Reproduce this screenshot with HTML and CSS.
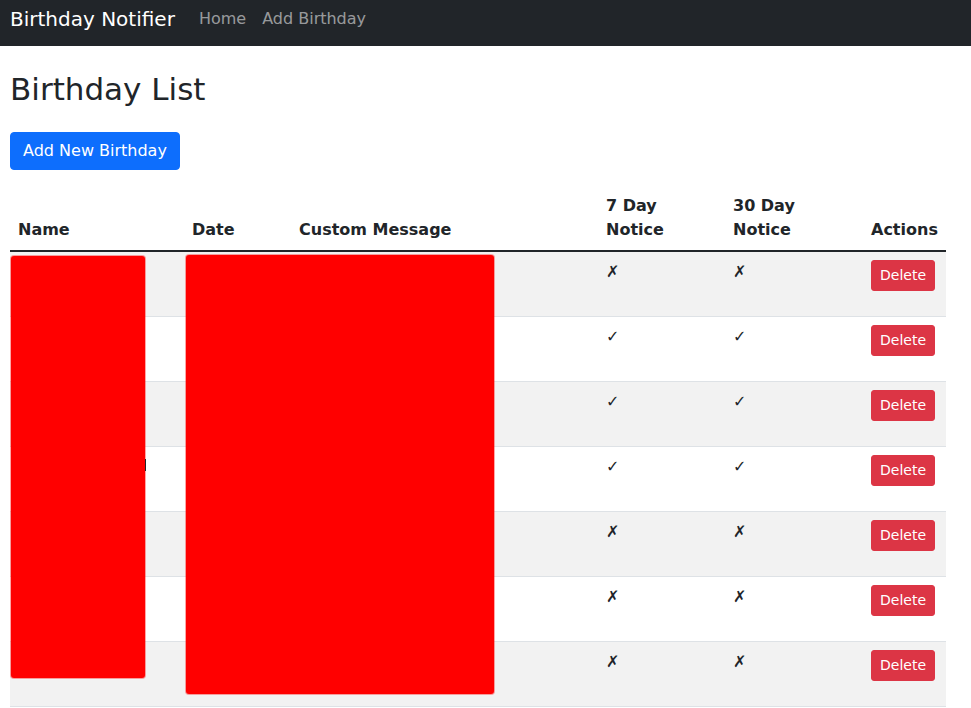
FILE: index.html
```html
<!DOCTYPE html>
<html lang="en">
<head>
<meta charset="utf-8">
<title>Birthday Notifier</title>
<link rel="stylesheet" href="styles.css">
</head>
<body>
<nav class="navbar">
  <a class="brand" href="#">Birthday Notifier</a>
  <a class="nav-link" href="#">Home</a>
  <a class="nav-link" href="#">Add Birthday</a>
</nav>
<main class="main">
  <h1 class="title">Birthday List</h1>
  <a class="btn btn-primary" href="#">Add New Birthday</a>
  <div class="table-wrap">
    <table class="table">
      <colgroup>
        <col class="c-name"><col class="c-date"><col class="c-msg"><col class="c-7"><col class="c-30"><col class="c-act">
      </colgroup>
      <thead>
        <tr><th>Name</th><th>Date</th><th>Custom Message</th><th>7 Day<br>Notice</th><th>30 Day<br>Notice</th><th>Actions</th></tr>
      </thead>
      <tbody>
        <tr class="odd"><td></td><td></td><td></td><td>✗</td><td>✗</td><td><button class="btn btn-sm btn-danger">Delete</button></td></tr>
        <tr><td></td><td></td><td></td><td>✓</td><td>✓</td><td><button class="btn btn-sm btn-danger">Delete</button></td></tr>
        <tr class="odd"><td></td><td></td><td></td><td>✓</td><td>✓</td><td><button class="btn btn-sm btn-danger">Delete</button></td></tr>
        <tr><td></td><td></td><td></td><td>✓</td><td>✓</td><td><button class="btn btn-sm btn-danger">Delete</button></td></tr>
        <tr class="odd"><td></td><td></td><td></td><td>✗</td><td>✗</td><td><button class="btn btn-sm btn-danger">Delete</button></td></tr>
        <tr><td></td><td></td><td></td><td>✗</td><td>✗</td><td><button class="btn btn-sm btn-danger">Delete</button></td></tr>
        <tr class="odd"><td></td><td></td><td></td><td>✗</td><td>✗</td><td><button class="btn btn-sm btn-danger">Delete</button></td></tr>
      </tbody>
    </table>
    <div class="redact redact-name"></div>
    <div class="redact redact-date"></div>
    <div class="peek"></div>
  </div>
</main>
</body>
</html>
```

FILE: styles.css
```css
html, body {
  margin: 0;
  padding: 0;
  background: #fff;
  color: #212529;
  font-family: "DejaVu Sans", "Noto Sans", sans-serif;
  font-size: 16px;
  line-height: 1.5;
}

.navbar {
  box-sizing: border-box;
  height: 46px;
  background: #212529;
  padding: 4px 10px 12px;
  display: flex;
  align-items: center;
}

.brand {
  color: #fff;
  font-size: 20px;
  line-height: 30px;
  text-decoration: none;
  margin-right: 16px;
  white-space: nowrap;
}

.nav-link {
  color: rgba(255, 255, 255, 0.55);
  text-decoration: none;
  padding: 0 8px;
  line-height: 24px;
}

.main {
  padding: 25px 25px 0 10px;
}

.title {
  margin: 0 0 24px;
  font-size: 31px;
  font-weight: 500;
  line-height: 1.2;
}

.btn {
  display: inline-block;
  box-sizing: border-box;
  font-family: inherit;
  font-size: 16px;
  line-height: 24px;
  padding: 6px 12px;
  border: 1px solid transparent;
  border-radius: 4px;
  text-decoration: none;
  cursor: pointer;
  vertical-align: middle;
}

.btn-primary {
  background: #0d6efd;
  border-color: #0d6efd;
  color: #fff;
}

.btn-sm {
  font-size: 14px;
  line-height: 21px;
  padding: 4px 8px;
  border-radius: 3px;
}

.btn-danger {
  background: #dc3545;
  border-color: #dc3545;
  color: #fff;
}

.table-wrap {
  position: relative;
  margin-top: 16px;
}

.table {
  width: 936px;
  border-collapse: separate;
  border-spacing: 0;
  table-layout: fixed;
  color: #212529;
}

.c-name { width: 174px; }
.c-date { width: 107px; }
.c-msg { width: 307px; }
.c-7 { width: 127px; }
.c-30 { width: 138px; }
.c-act { width: 83px; }

.table th {
  text-align: left;
  font-weight: 700;
  vertical-align: bottom;
  padding: 8px;
  border-bottom: 2px solid #212529;
}

.table td {
  vertical-align: top;
  padding: 8px;
  border-bottom: 1px solid #dee2e6;
}

.table tbody tr {
  height: 65px;
}

.table tbody tr.odd td {
  background: #f2f2f2;
}

.redact {
  position: absolute;
  background: #ff0000;
  border-radius: 3px;
  box-shadow: 0 0 0 1px rgba(255, 0, 0, 0.35);
}

.redact-name {
  left: 1px;
  top: 70px;
  width: 134px;
  height: 422px;
}

.redact-date {
  left: 176px;
  top: 69px;
  width: 308px;
  height: 439px;
}

.peek {
  position: absolute;
  left: 135px;
  top: 273px;
  width: 1px;
  height: 12px;
  background: #212529;
}
```
